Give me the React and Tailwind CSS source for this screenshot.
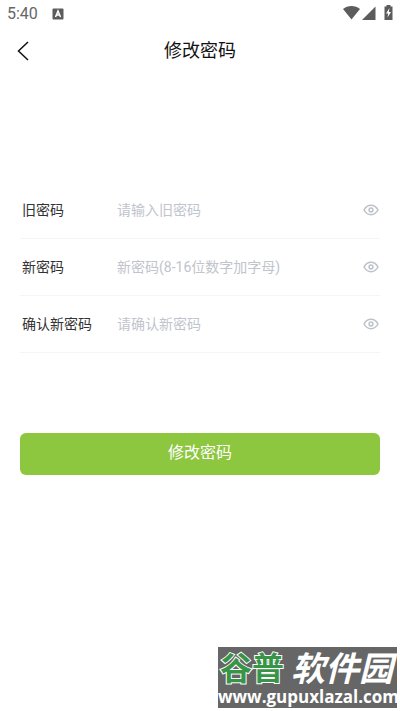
const fields = [
  { id: 'old', label: '旧密码', hint: '请输入旧密码' },
  { id: 'new', label: '新密码', hint: '新密码(8-16位数字加字母)' },
  { id: 'confirm', label: '确认新密码', hint: '请确认新密码' },
];

function StatusBar() {
  return (
    <div className="flex h-7 items-center px-[7px] text-[#666]">
      <span className="text-base leading-5">5:40</span>
      <svg className="ml-3.5 size-3" viewBox="0 0 12 12" aria-hidden="true">
        <rect x="0.5" y="0.5" width="11" height="11" rx="1" fill="#5c5c5c" />
        <path d="M3.5 9 6 3l2.500 6M4.500 7h3" fill="none" stroke="#fff" strokeWidth="1.500" />
      </svg>
      <div className="ml-auto flex items-center pb-0.5">
        <svg className="h-4 w-[17px]" viewBox="0 0 17 16" aria-hidden="true">
          <path d="M0 4C4.500 0 12.500 0 17 4L8.500 14.500z" fill="#5c5c5c" />
        </svg>
        <svg className="ml-0.5 h-4 w-[14px]" viewBox="0 0 14 16" aria-hidden="true">
          <path d="M13.500 1.500V15H0z" fill="#5c5c5c" />
        </svg>
        <svg className="ml-2 h-4 w-[9px]" viewBox="0 0 9 16" aria-hidden="true">
          <path d="M2.500 0h4v1.500H8.500V15H.500V1.500h2z" fill="#5c5c5c" />
          <path d="M5.500 3 2 8.500h2.200L3.500 12.500 7 7H4.800z" fill="#fff" />
        </svg>
      </div>
    </div>
  );
}

function Field({ id, label, hint }) {
  return (
    <div className="box-content flex h-14 items-center border-b border-[#f5f5f5] text-sm">
      <label htmlFor={id} className="w-[97px] shrink-0 pl-0.5 text-[#333]">{label}</label>
      <input
        id={id}
        type="password"
        placeholder={hint}
        className="min-w-0 flex-1 bg-transparent outline-none placeholder:text-[#c0c4cc]"
      />
      <button type="button" aria-label="显示密码" className="mr-px shrink-0">
        <svg className="h-3 w-4" viewBox="0 0 16 12" fill="none" stroke="#bdc1c9" aria-hidden="true">
          <path d="M1 6C4.500-.2 11.500-.2 15 6 11.500 12.200 4.500 12.200 1 6z" strokeWidth="1.500" />
          <circle cx="8" cy="6" r="1.900" strokeWidth="1.500" />
        </svg>
      </button>
    </div>
  );
}

export default function App() {
  return (
    <div className="relative flex min-h-screen flex-col bg-white font-[Roboto,'Noto_Sans_CJK_SC',sans-serif]">
      <StatusBar />
      <header className="grid h-[46px] grid-cols-[40px_1fr_40px] items-center">
        <button type="button" aria-label="返回" className="flex justify-center pl-1.5">
          <svg className="h-5 w-3" viewBox="0 0 12 20" fill="none" stroke="#111" strokeWidth="1.500" aria-hidden="true">
            <path d="M11 1 1.500 10 11 19" />
          </svg>
        </button>
        <h1 className="text-center text-lg text-[#111]">修改密码</h1>
      </header>
      <form className="flex flex-col px-5 pt-[108px]" onSubmit={(e) => e.preventDefault()}>
        {fields.map((f) => (
          <Field key={f.id} {...f} />
        ))}
        <button type="submit" className="mt-20 h-[42px] rounded-md bg-[#8dc63f] pb-0.5 text-base text-white">
          修改密码
        </button>
      </form>
      <div className="absolute right-[3px] bottom-[3px] h-[61px] w-[179px] bg-[#666] text-white">
        <div className="flex h-10 items-center justify-between px-0.5 pt-1 whitespace-nowrap">
          <span className="text-[32px] leading-8 font-bold text-[#389447] [-webkit-text-stroke:2px_white] [paint-order:stroke_fill]">谷普</span>
          <span className="pr-0.5 text-[34px] leading-8 font-bold italic">软件园</span>
        </div>
        <div className="text-center font-['Open_Sans',sans-serif] text-[17px] leading-5 font-bold whitespace-nowrap">www.gupuxlazal.com</div>
      </div>
    </div>
  );
}
